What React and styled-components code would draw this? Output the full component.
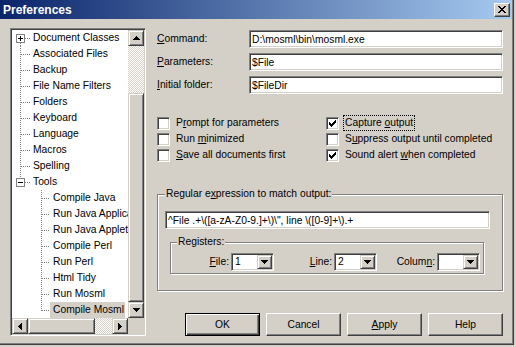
import React from "react";
import styled, { createGlobalStyle, css } from "styled-components";

const GlobalStyle = createGlobalStyle`
  html, body { margin: 0; padding: 0; background: #d4d0c8; }
  body {
    font-family: "Liberation Sans", Arial, sans-serif;
    font-size: 10.3px;
    line-height: 12px;
    color: #000;
  }
  * { box-sizing: border-box; }
`;

const sunken = css`
  border: 1px solid;
  border-color: #808080 #ffffff #ffffff #808080;
  box-shadow: inset 1px 1px 0 #404040, inset -1px -1px 0 #d4d0c8;
  padding: 1px;
`;

const raised = css`
  background: #d4d0c8;
  border: 1px solid;
  border-color: #d4d0c8 #404040 #404040 #d4d0c8;
  box-shadow: inset 1px 1px 0 #ffffff, inset -1px -1px 0 #808080;
`;

const etched = css`
  border: 1px solid #808080;
  box-shadow: inset 1px 1px 0 #ffffff, 1px 1px 0 #ffffff;
`;

const Window = styled.div`
  width: 514px;
  height: 345px;
  border-right: 1px solid #404040;
  border-bottom: 1px solid #404040;
  background: #d4d0c8;
`;

const Frame = styled.div`
  height: 100%;
  border-right: 1px solid #808080;
  border-bottom: 1px solid #808080;
  display: flex;
  flex-direction: column;
`;

const TitleBar = styled.div`
  height: 19px;
  flex: none;
  display: flex;
  align-items: center;
  justify-content: space-between;
  padding: 0 2px 0 3px;
  background: linear-gradient(to right, #0a246a, #a6caf0);
`;

const Title = styled.span`
  font: bold 12px/12px "Liberation Sans", Arial, sans-serif;
  color: #fff;
`;

const CaptionButton = styled.div`
  width: 16px;
  height: 14px;
  display: flex;
  align-items: center;
  justify-content: center;
  background: #d4d0c8;
  border: 1px solid;
  border-color: #ffffff #404040 #404040 #ffffff;
  box-shadow: inset -1px -1px 0 #808080;
`;

const Body = styled.div`
  flex: 1;
  min-height: 0;
  display: flex;
  gap: 11px;
  padding: 9px 9px 7px 10px;
`;

/* ---------- Tree ---------- */
const TreeView = styled.div`
  ${sunken};
  width: 136px;
  flex: none;
  display: grid;
  grid-template-columns: 1fr 16px;
  grid-template-rows: 1fr 16px;
`;

const TreeContent = styled.div`
  background: #fff;
  overflow: hidden;
`;

const TreeRow = styled.div`
  display: flex;
  align-items: center;
  height: 16px;
  white-space: nowrap;
`;

const GuideSvg = styled.svg`
  flex: none;
  display: block;
`;

const Dot = styled.line`
  stroke: #808080;
  stroke-width: 1;
  stroke-dasharray: 1 1;
  shape-rendering: crispEdges;
`;

const TreeLabel = styled.span`
  height: 16px;
  line-height: 16px;
  padding: 0 1px 0 3px;
  background: ${(p) => (p.$selected ? "#d4d0c8" : "transparent")};
`;

const VScroll = styled.div`
  display: flex;
  flex-direction: column;
`;

const HScroll = styled.div`
  display: flex;
`;

const ScrollButton = styled.div`
  ${raised};
  width: 16px;
  height: 16px;
  flex: none;
  display: flex;
  align-items: center;
  justify-content: center;
`;

const Track = styled.div`
  flex: ${(p) => (p.$size ? `0 0 ${p.$size}px` : "1")};
  background: repeating-conic-gradient(#d4d0c8 0 25%, #ffffff 0 50%) 0 0 / 2px 2px;
`;

const Thumb = styled.div`
  ${raised};
  flex: ${(p) => (p.$size ? `0 0 ${p.$size}px` : "1")};
`;

const Corner = styled.div`
  background: #d4d0c8;
`;

/* ---------- Right pane ---------- */
const RightPane = styled.div`
  flex: 1;
  min-width: 0;
  display: flex;
  flex-direction: column;
`;

const FieldGrid = styled.div`
  display: grid;
  grid-template-columns: 92px 1fr;
  row-gap: 5px;
  align-items: center;
  margin-top: 2px;
`;

const FieldLabel = styled.label``;

const TextField = styled.input`
  ${sunken};
  display: block;
  width: 100%;
  height: 18px;
  margin: 0;
  padding: 1px 2px;
  background: #fff;
  color: #000;
  font: inherit;
  outline: none;
`;

const CheckGrid = styled.div`
  display: grid;
  grid-template-columns: 169px 1fr;
  grid-auto-rows: 16px;
  margin-top: 21px;
`;

const CheckItem = styled.div`
  display: flex;
  align-items: center;
  gap: 6px;
`;

const CheckBox = styled.span`
  ${sunken};
  width: 13px;
  height: 13px;
  flex: none;
  background: #fff;
  display: flex;
  align-items: center;
  justify-content: center;
`;

const CheckText = styled.span`
  padding: 1px 1px;
  margin-left: -1px;
  line-height: 12px;
  outline: ${(p) => (p.$focused ? "1px dotted #000" : "none")};
`;

const GroupBox = styled.div`
  ${etched};
  position: relative;
  margin: ${(p) => p.$margin};
  padding: ${(p) => p.$padding};
`;

const Legend = styled.span`
  position: absolute;
  top: -7px;
  left: ${(p) => p.$left}px;
  padding: 0 1px;
  line-height: 12px;
  background: #d4d0c8;
  white-space: nowrap;
`;

const RegRow = styled.div`
  display: grid;
  grid-template-columns: repeat(3, 1fr);
  justify-items: end;
`;

const Pair = styled.div`
  display: flex;
  align-items: center;
  gap: 2px;
`;

const Combo = styled.div`
  ${sunken};
  width: 43px;
  height: 18px;
  background: #fff;
  display: flex;
  justify-content: space-between;
`;

const ComboValue = styled.span`
  padding-left: 2px;
  line-height: 14px;
`;

const DropButton = styled.span`
  ${raised};
  width: 15px;
  flex: none;
  display: flex;
  align-items: center;
  justify-content: center;
`;

const ButtonRow = styled.div`
  display: flex;
  justify-content: flex-end;
  gap: 6px;
  margin-top: auto;
`;

const PushButton = styled.button`
  width: 75px;
  height: 23px;
  padding: 0;
  margin: 0;
  font: inherit;
  color: #000;
  background: #d4d0c8;
  border: 1px solid;
  border-color: ${(p) => (p.$default ? "#000 #000 #000 #000" : "#fff #404040 #404040 #fff")};
  box-shadow: ${(p) =>
    p.$default
      ? "inset 1px 1px 0 #fff, inset -1px -1px 0 #404040, inset -2px -2px 0 #808080"
      : "inset -1px -1px 0 #808080"};
`;

/* ---------- Drawings ---------- */
function Arrow({ dir }) {
  const widths = [7, 5, 3, 1];
  const horiz = dir === "up" || dir === "down";
  const rects = widths.map((w, i) => {
    if (dir === "down") return <rect key={i} x={i} y={i} width={w} height={1} />;
    if (dir === "up") return <rect key={i} x={i} y={3 - i} width={w} height={1} />;
    if (dir === "right") return <rect key={i} x={i} y={i} width={1} height={w} />;
    return <rect key={i} x={3 - i} y={i} width={1} height={w} />;
  });
  return (
    <svg width={horiz ? 7 : 4} height={horiz ? 4 : 7} shapeRendering="crispEdges" fill="#000">
      {rects}
    </svg>
  );
}

function CloseGlyph() {
  const rows = [
    [[0, 2], [6, 2]],
    [[1, 2], [5, 2]],
    [[2, 4]],
    [[3, 2]],
    [[2, 4]],
    [[1, 2], [5, 2]],
    [[0, 2], [6, 2]],
  ];
  return (
    <svg width="8" height="7" shapeRendering="crispEdges" fill="#000">
      {rows.flatMap((segs, y) =>
        segs.map(([x, w], j) => <rect key={`${y}-${j}`} x={x} y={y} width={w} height={1} />)
      )}
    </svg>
  );
}

function CheckGlyph() {
  const starts = [2, 3, 4, 3, 2, 1, 0];
  return (
    <svg width="7" height="7" shapeRendering="crispEdges" fill="#000">
      {starts.map((s, x) => (
        <rect key={x} x={x} y={s} width={1} height={3} />
      ))}
    </svg>
  );
}

function Guides({ level, expander, first, last }) {
  if (level === 0) {
    return (
      <GuideSvg width={18} height={16}>
        {expander ? (
          <>
            {!first && <Dot x1={8.5} y1={0} x2={8.5} y2={4} />}
            {!last && <Dot x1={8.5} y1={13} x2={8.5} y2={16} />}
            <Dot x1={13} y1={8.5} x2={18} y2={8.5} />
            <rect x={4.5} y={4.5} width={8} height={8} fill="#fff" stroke="#808080" shapeRendering="crispEdges" />
            <rect x={6} y={8} width={5} height={1} fill="#000" />
            {expander === "plus" && <rect x={8} y={6} width={1} height={5} fill="#000" />}
          </>
        ) : (
          <>
            <Dot x1={8.5} y1={0} x2={8.5} y2={last ? 9 : 16} />
            <Dot x1={9} y1={8.5} x2={18} y2={8.5} />
          </>
        )}
      </GuideSvg>
    );
  }
  return (
    <GuideSvg width={38} height={16}>
      <Dot x1={29.5} y1={0} x2={29.5} y2={last ? 9 : 16} />
      <Dot x1={30} y1={8.5} x2={38} y2={8.5} />
    </GuideSvg>
  );
}

const treeItems = [
  { label: "Document Classes", level: 0, expander: "plus", first: true },
  { label: "Associated Files", level: 0 },
  { label: "Backup", level: 0 },
  { label: "File Name Filters", level: 0 },
  { label: "Folders", level: 0 },
  { label: "Keyboard", level: 0 },
  { label: "Language", level: 0 },
  { label: "Macros", level: 0 },
  { label: "Spelling", level: 0 },
  { label: "Tools", level: 0, expander: "minus", last: true },
  { label: "Compile Java", level: 1 },
  { label: "Run Java Application", level: 1 },
  { label: "Run Java Applet", level: 1 },
  { label: "Compile Perl", level: 1 },
  { label: "Run Perl", level: 1 },
  { label: "Html Tidy", level: 1 },
  { label: "Run Mosml", level: 1 },
  { label: "Compile Mosml", level: 1, last: true, selected: true },
];

const fields = [
  { key: "C", rest: "ommand:", value: "D:\\mosml\\bin\\mosml.exe" },
  { key: "P", rest: "arameters:", value: "$File" },
  { key: "I", rest: "nitial folder:", value: "$FileDir" },
];

const checks = [
  { pre: "P", key: "r", post: "ompt for parameters", checked: false },
  { pre: "Capture ", key: "o", post: "utput", checked: true, focused: true },
  { pre: "Run ", key: "m", post: "inimized", checked: false },
  { pre: "S", key: "u", post: "ppress output until completed", checked: false },
  { pre: "", key: "S", post: "ave all documents first", checked: false },
  { pre: "Sound alert ", key: "w", post: "hen completed", checked: true },
];

const registers = [
  { pre: "", key: "F", post: "ile:", value: "1" },
  { pre: "", key: "L", post: "ine:", value: "2" },
  { pre: "Colum", key: "n", post: ":", value: "" },
];

export default function App() {
  return (
    <>
      <GlobalStyle />
      <Window>
        <Frame>
          <TitleBar>
            <Title>Preferences</Title>
            <CaptionButton>
              <CloseGlyph />
            </CaptionButton>
          </TitleBar>
          <Body>
            <TreeView>
              <TreeContent>
                {treeItems.map((it) => (
                  <TreeRow key={it.label}>
                    <Guides level={it.level} expander={it.expander} first={it.first} last={it.last} />
                    <TreeLabel $selected={it.selected}>{it.label}</TreeLabel>
                  </TreeRow>
                ))}
              </TreeContent>
              <VScroll>
                <ScrollButton>
                  <Arrow dir="up" />
                </ScrollButton>
                <Track $size={47} />
                <Thumb />
                <ScrollButton>
                  <Arrow dir="down" />
                </ScrollButton>
              </VScroll>
              <HScroll>
                <ScrollButton>
                  <Arrow dir="left" />
                </ScrollButton>
                <Thumb $size={67} />
                <Track />
                <ScrollButton>
                  <Arrow dir="right" />
                </ScrollButton>
              </HScroll>
              <Corner />
            </TreeView>

            <RightPane>
              <FieldGrid>
                {fields.map((f) => (
                  <React.Fragment key={f.rest}>
                    <FieldLabel>
                      <u>{f.key}</u>
                      {f.rest}
                    </FieldLabel>
                    <TextField readOnly value={f.value} />
                  </React.Fragment>
                ))}
              </FieldGrid>

              <CheckGrid>
                {checks.map((c) => (
                  <CheckItem key={c.pre + c.post}>
                    <CheckBox>{c.checked && <CheckGlyph />}</CheckBox>
                    <CheckText $focused={c.focused}>
                      {c.pre}
                      <u>{c.key}</u>
                      {c.post}
                    </CheckText>
                  </CheckItem>
                ))}
              </CheckGrid>

              <GroupBox $margin="31px 0 0 0" $padding="16px 12px 16px 7px">
                <Legend $left={7}>
                  Regular e<u>x</u>pression to match output:
                </Legend>
                <TextField readOnly value={'^File .+\\([a-zA-Z0-9.]+\\)\\", line \\([0-9]+\\).+'} />
                <GroupBox $margin="13px 6px 0 5px" $padding="10px 3px 2px 0">
                  <Legend $left={6}>Registers:</Legend>
                  <RegRow>
                    {registers.map((r) => (
                      <Pair key={r.post + r.key}>
                        <FieldLabel>
                          {r.pre}
                          <u>{r.key}</u>
                          {r.post}
                        </FieldLabel>
                        <Combo>
                          <ComboValue>{r.value}</ComboValue>
                          <DropButton>
                            <Arrow dir="down" />
                          </DropButton>
                        </Combo>
                      </Pair>
                    ))}
                  </RegRow>
                </GroupBox>
              </GroupBox>

              <ButtonRow>
                <PushButton $default>OK</PushButton>
                <PushButton>Cancel</PushButton>
                <PushButton>
                  <u>A</u>pply
                </PushButton>
                <PushButton>Help</PushButton>
              </ButtonRow>
            </RightPane>
          </Body>
        </Frame>
      </Window>
    </>
  );
}
